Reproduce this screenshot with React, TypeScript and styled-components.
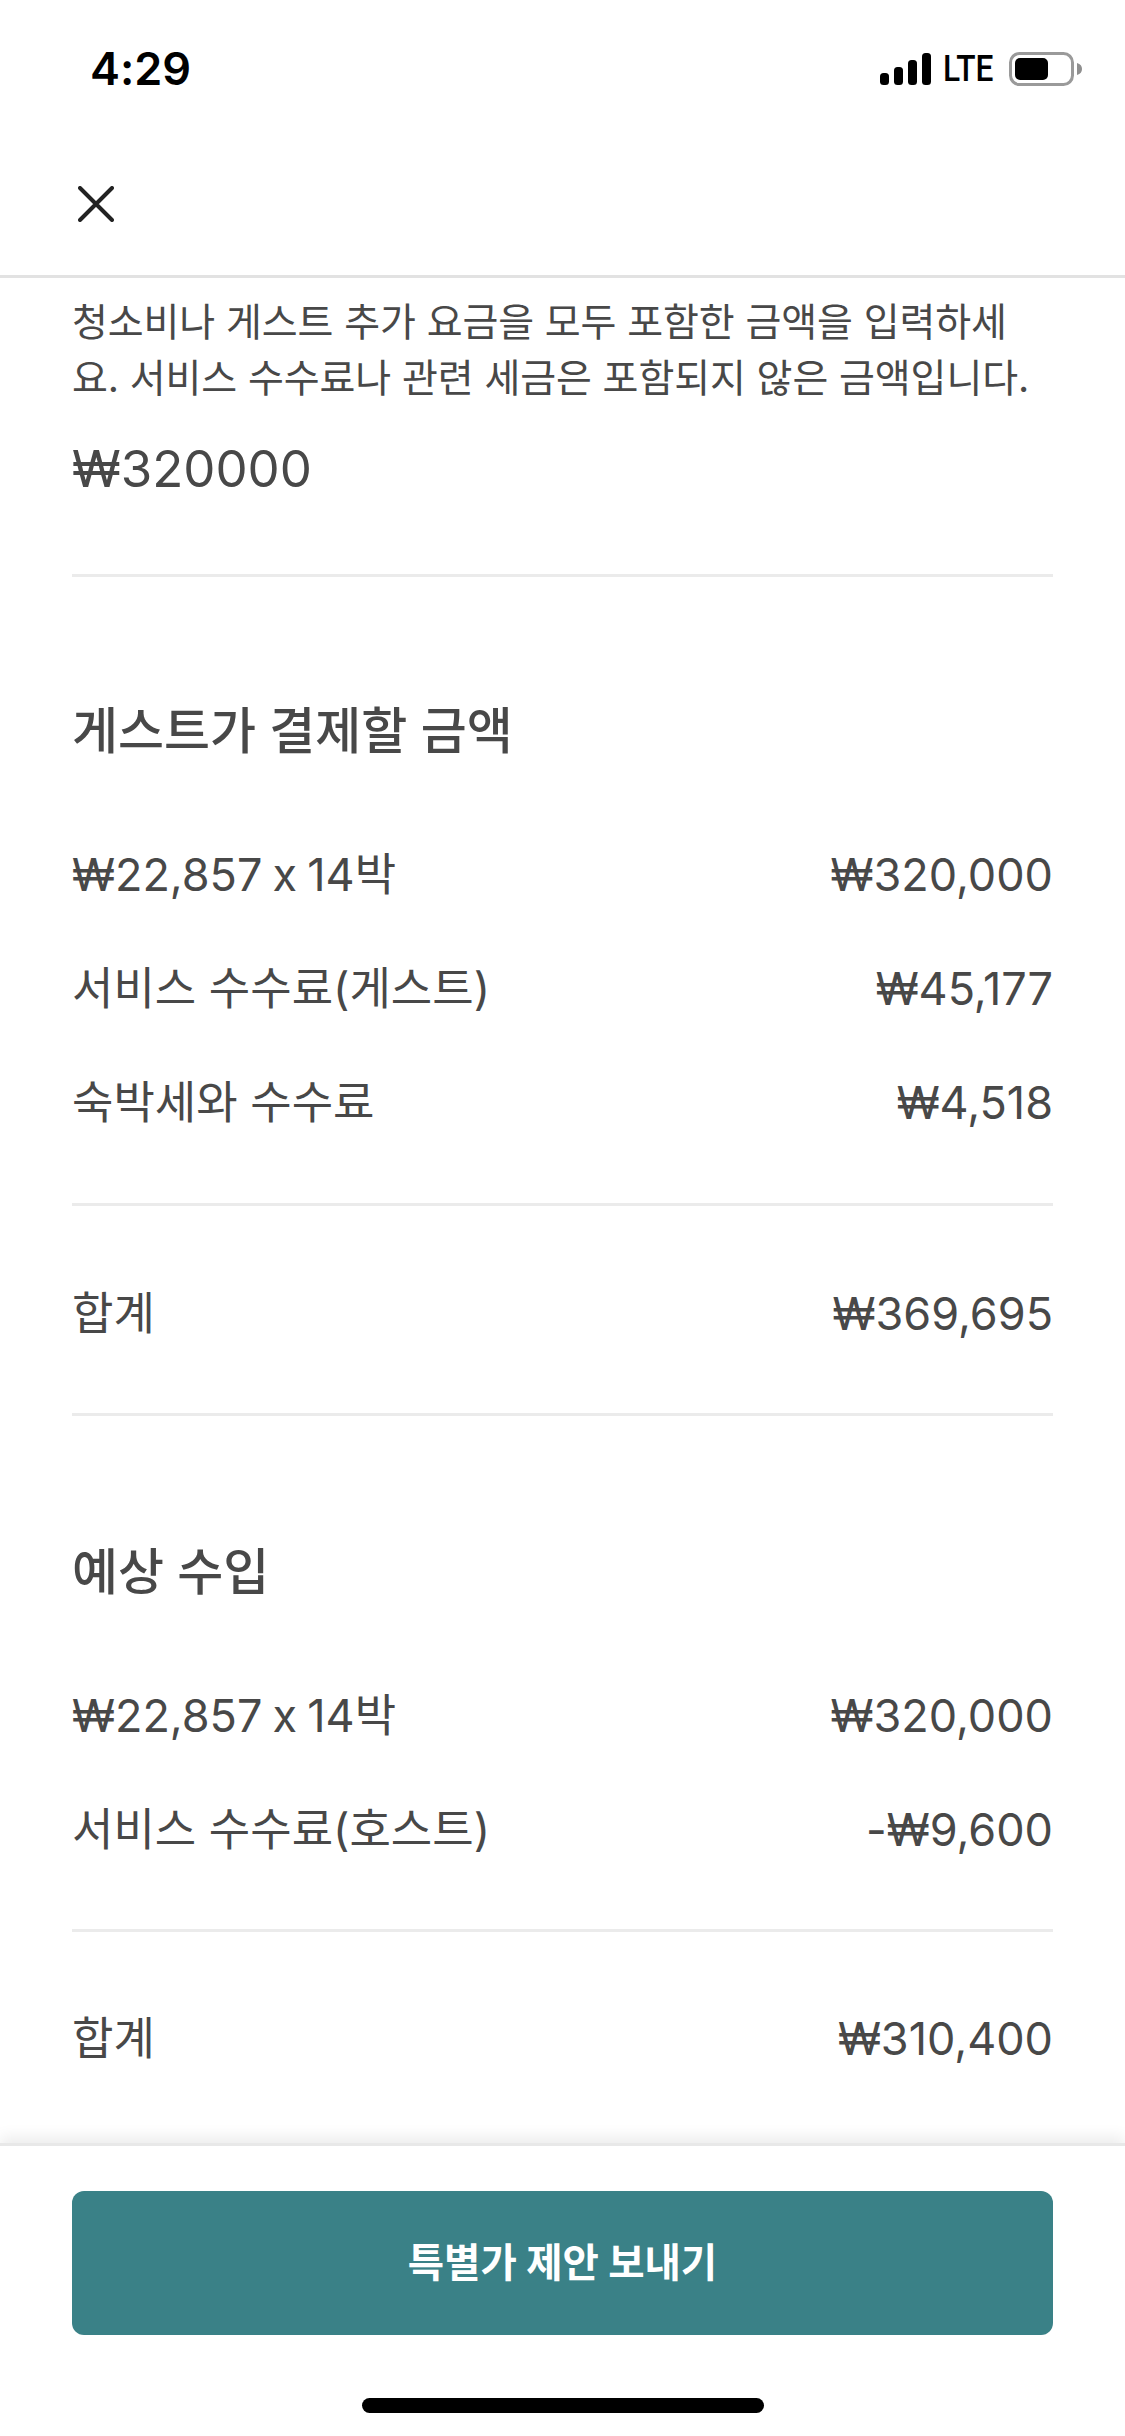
import React from "react";
import styled, { createGlobalStyle } from "styled-components";

const Global = createGlobalStyle`
  html, body { margin: 0; padding: 0; background: #fff; }
  * { box-sizing: border-box; }
`;

const Page = styled.div`
  width: 1125px;
  height: 2436px;
  display: flex;
  flex-direction: column;
  overflow: hidden;
  background: #fff;
  color: #484848;
  font-family: Inter, "Noto Sans CJK KR", sans-serif;
  font-feature-settings: "calt" 0;
`;

const StatusBar = styled.div`
  height: 136px;
  padding: 43px 43px 0 90px;
  display: flex;
  justify-content: space-between;
  align-items: flex-start;
`;

const Time = styled.div`
  font-size: 45px;
  line-height: 52px;
  font-weight: 600;
  color: #000;
`;

const StatusIcons = styled.div`
  display: flex;
  align-items: center;
  gap: 12px;
  height: 52px;
`;

const Lte = styled.span`
  display: inline-block;
  width: 53px;
  font-family: Roboto, sans-serif;
  font-size: 36px;
  font-weight: 500;
  white-space: nowrap;
  color: #000;
  transform: scaleX(0.88);
  transform-origin: left center;
`;

const NavBar = styled.div`
  height: 142px;
  padding: 50px 0 0 78px;
  border-bottom: 3px solid #e2e2e2;
`;

const Content = styled.div`
  flex: 1;
  min-height: 0;
  padding: 16px 72px 0;
`;

const Help = styled.p`
  margin: 0;
  font-size: 39px;
  line-height: 56px;
  letter-spacing: -0.1px;
  white-space: nowrap;
  color: #484848;
`;

const Amount = styled.div`
  margin-top: 31px;
  font-size: 51px;
  line-height: 64px;
`;

const Divider = styled.div<{ $top: number; $bottom: number }>`
  height: 3px;
  background: #ebebeb;
  margin: ${(p) => p.$top}px 0 ${(p) => p.$bottom}px;
`;

const Heading = styled.h2`
  margin: 0;
  font-size: 50px;
  line-height: 64px;
  font-weight: 500;
`;

const Rows = styled.div`
  margin-top: 80px;
  display: flex;
  flex-direction: column;
  gap: 50px;
`;

const Row = styled.div`
  display: flex;
  justify-content: space-between;
  align-items: center;
  font-size: 45px;
  line-height: 64px;
`;

const Nights = styled.span`
  word-spacing: -2.5px;
`;

const Footer = styled.div`
  height: 293px;
  padding: 45px 72px 0;
  border-top: 3px solid #e8e8e8;
  box-shadow: 0 -6px 14px rgba(0, 0, 0, 0.08);
  background: #fff;
  display: flex;
  flex-direction: column;
  align-items: center;
`;

const Button = styled.button`
  width: 100%;
  height: 144px;
  padding: 0 0 8px;
  border: 0;
  border-radius: 12px;
  background: #3a8187;
  color: #fff;
  font-family: inherit;
  font-size: 39.5px;
  font-weight: 700;
`;

const HomeBar = styled.div`
  width: 402px;
  height: 15px;
  margin-top: 63px;
  border-radius: 8px;
  background: #000;
`;

const Signal = () => (
  <svg width="51" height="32" viewBox="0 0 51 32">
    <rect x="0" y="20" width="9" height="12" rx="3.5" />
    <rect x="14" y="14" width="9" height="18" rx="3.5" />
    <rect x="28" y="7" width="9" height="25" rx="3.5" />
    <rect x="42" y="0" width="9" height="32" rx="3.5" />
  </svg>
);

const Battery = () => (
  <svg width="74" height="36" viewBox="0 0 74 36">
    <rect x="2.5" y="2.5" width="62" height="31" rx="9" fill="none" stroke="#9a9a9a" strokeWidth="3" />
    <rect x="7" y="7" width="33" height="22" rx="5" fill="#000" />
    <path d="M69 12 c3.500 1 5 3 5 6 s-1.500 5-5 6z" fill="#8f8f8f" />
  </svg>
);

const Close = () => (
  <svg width="36" height="36" viewBox="0 0 36 36" fill="none" stroke="#222" strokeWidth="4" strokeLinecap="round">
    <path d="M2 2 L34 34 M34 2 L2 34" />
  </svg>
);

const guest = [
  ["₩22,857 x 14박", "₩320,000"],
  ["서비스 수수료(게스트)", "₩45,177"],
  ["숙박세와 수수료", "₩4,518"],
];
const host = [
  ["₩22,857 x 14박", "₩320,000"],
  ["서비스 수수료(호스트)", "-₩9,600"],
];

const PriceRows = ({ items }: { items: string[][] }) => (
  <Rows>
    {items.map(([label, value]) => (
      <Row key={label}>
        {label.startsWith("₩") ? <Nights>{label}</Nights> : <span>{label}</span>}
        <span>{value}</span>
      </Row>
    ))}
  </Rows>
);

export default function App() {
  return (
    <Page>
      <Global />
      <StatusBar>
        <Time>4:29</Time>
        <StatusIcons>
          <Signal />
          <Lte>LTE</Lte>
          <Battery />
        </StatusIcons>
      </StatusBar>
      <NavBar>
        <Close />
      </NavBar>
      <Content>
        <Help>
          청소비나 게스트 추가 요금을 모두 포함한 금액을 입력하세
          <br />
          요. 서비스 수수료나 관련 세금은 포함되지 않은 금액입니다.
        </Help>
        <Amount>₩320000</Amount>
        <Divider $top={73} $bottom={122} />
        <Heading>게스트가 결제할 금액</Heading>
        <PriceRows items={guest} />
        <Divider $top={68} $bottom={76} />
        <Row>
          <span>합계</span>
          <span>₩369,695</span>
        </Row>
        <Divider $top={67} $bottom={124} />
        <Heading>예상 수입</Heading>
        <PriceRows items={host} />
        <Divider $top={67} $bottom={75} />
        <Row>
          <span>합계</span>
          <span>₩310,400</span>
        </Row>
      </Content>
      <Footer>
        <Button>특별가 제안 보내기</Button>
        <HomeBar />
      </Footer>
    </Page>
  );
}
